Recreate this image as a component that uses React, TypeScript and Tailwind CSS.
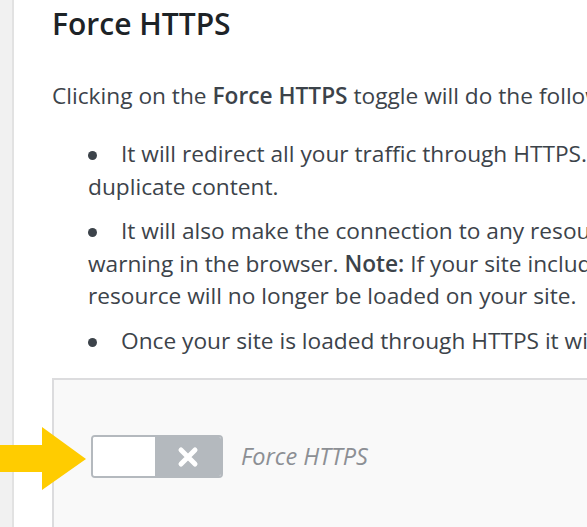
export default function App() {
  const font = { fontFamily: '"Segoe UI", "Open Sans", "Noto Sans", sans-serif' };
  return (
    <div className="flex h-[527px] w-[587px] overflow-hidden bg-white text-[#3c434a]" style={font}>
      <div className="w-[14px] shrink-0 border-r-2 border-[#e2e2e2] bg-[#f1f1f1]" />
      <div className="relative min-w-0 flex-1 pl-[38px] pt-[4px]">
        <h1 className="whitespace-nowrap text-[30px] font-semibold leading-[40px] text-[#1d2327]">Force HTTPS</h1>
        <p className="mt-[36px] whitespace-nowrap text-[22.7px] leading-[32px]">
          Clicking on the <strong className="font-semibold">Force HTTPS</strong> toggle will do the following:
        </p>
        <ul className="mt-[26px] flex flex-col gap-[12px] whitespace-nowrap pl-[36px] text-[22.7px] leading-[32.5px]">
          <li>
            <span className="mr-[24px] inline-block h-[9px] w-[9px] rounded-full bg-[#3c434a] align-middle" />
            It will redirect all your traffic through HTTPS. This prevents search engines from seeing
            <br />
            duplicate content.
          </li>
          <li>
            <span className="mr-[24px] inline-block h-[9px] w-[9px] rounded-full bg-[#3c434a] align-middle" />
            It will also make the connection to any resource loaded over HTTP secure, to avoid a mixed content
            <br />
            warning in the browser. <strong className="font-semibold">Note:</strong> If your site includes a resource that cannot be loaded through HTTPS that
            <br />
            resource will no longer be loaded on your site.
          </li>
          <li>
            <span className="mr-[24px] inline-block h-[9px] w-[9px] rounded-full bg-[#3c434a] align-middle" />
            Once your site is loaded through HTTPS it will remain secure.
          </li>
        </ul>
        <div className="mt-[21px] h-[200px] w-[700px] border-2 border-[#dcdcde] bg-[#f9f9f9] pl-[37px] pt-[55px]">
          <div className="flex items-center gap-[18px]">
            <div className="flex h-[43px] w-[132px] overflow-hidden rounded-[4px] border-2 border-[#b4b9be]">
              <div className="w-[62px] bg-white" />
              <div className="flex flex-1 items-center justify-center bg-[#b4b9be]">
                <svg width="22" height="22" viewBox="0 0 22 22">
                  <path d="M4 4 L18 18 M18 4 L4 18" stroke="white" strokeWidth="5" strokeLinecap="round" />
                </svg>
              </div>
            </div>
            <span className="whitespace-nowrap text-[23.5px] italic text-[#8c8f94]">Force HTTPS</span>
          </div>
        </div>
        <svg className="absolute left-[-14px] top-[427px]" width="88" height="64" viewBox="0 0 88 64">
          <polygon points="0,18 42,18 42,0 86,32 42,63 42,45 0,45" fill="#ffcc00" />
        </svg>
      </div>
    </div>
  );
}
